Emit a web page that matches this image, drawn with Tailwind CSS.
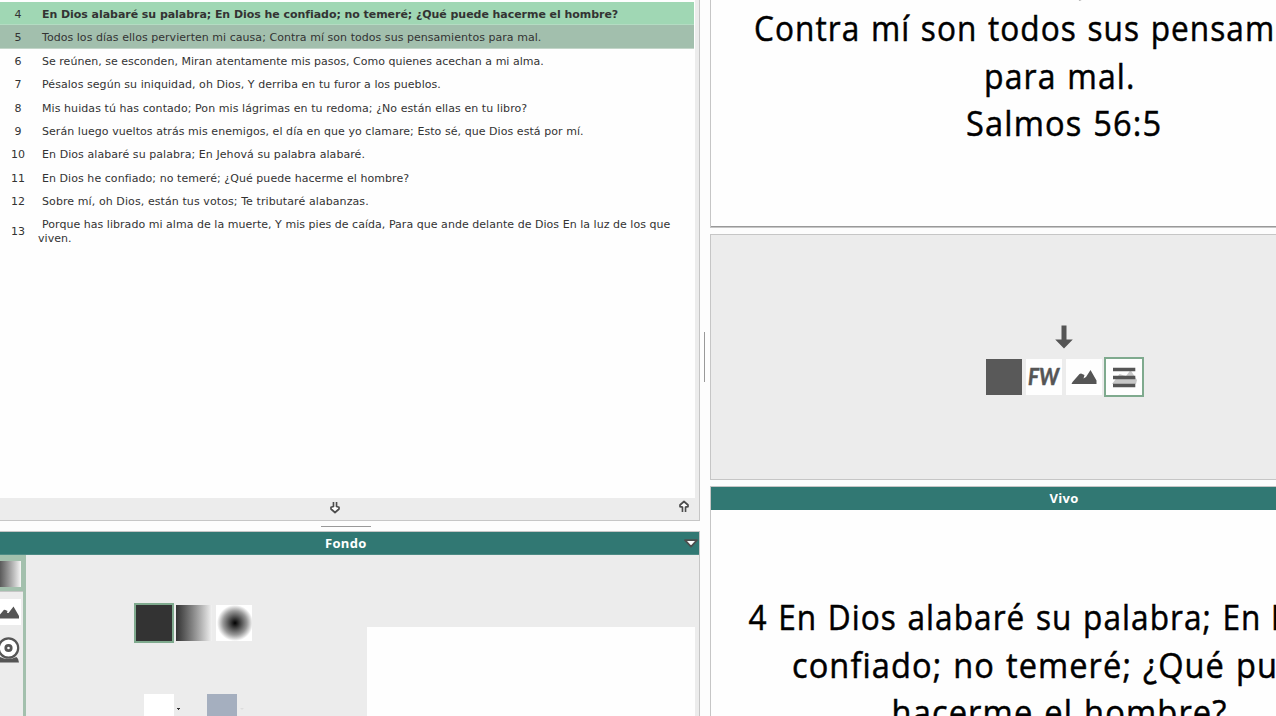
<!DOCTYPE html>
<html lang="es">
<head>
<meta charset="utf-8">
<title>Salmos 56</title>
<script src="https://cdn.jsdelivr.net/npm/@tailwindcss/browser@4"></script>
</head>
<body class="h-[716px] w-[1276px] overflow-hidden bg-[#fdfdfd] font-['DejaVu_Sans',sans-serif] text-[#333]">
<div class="flex h-[716px] w-[1276px] overflow-hidden">

  <!-- Left column -->
  <div class="flex w-[700px] shrink-0 flex-col">
    <section class="flex h-[521px] shrink-0 flex-col border-r border-b border-[#c6c6c6] bg-[#ececec]">
      <div class="flex h-[498px] w-[695px] flex-col bg-[#fefefe] pt-[2px] text-[11px] leading-[14px]">
        <div class="flex h-[23.4px] w-[694px] items-center border-b border-[#b3dcc2] bg-[#a0d7b4] pt-[3.2px]"><span class="w-[36px] text-center">4</span><span class="ml-[6px] whitespace-nowrap font-bold tracking-[-0.05px]">En Dios alabaré su palabra; En Dios he confiado; no temeré; ¿Qué puede hacerme el hombre?</span></div>
        <div class="flex h-[23.4px] w-[694px] items-center border-b border-[#c3d5c9] bg-[#a2bfad] pt-[2px]"><span class="w-[36px] text-center">5</span><span class="ml-[6px] whitespace-nowrap tracking-[0.04px]">Todos los días ellos pervierten mi causa; Contra mí son todos sus pensamientos para mal.</span></div>
        <div class="flex h-[23.4px] items-center pt-[2.6px]"><span class="w-[36px] text-center">6</span><span class="ml-[6px] whitespace-nowrap tracking-[0.02px]">Se reúnen, se esconden, Miran atentamente mis pasos, Como quienes acechan a mi alma.</span></div>
        <div class="flex h-[23.4px] items-center pt-[2.6px]"><span class="w-[36px] text-center">7</span><span class="ml-[6px] whitespace-nowrap tracking-[0.06px]">Pésalos según su iniquidad, oh Dios, Y derriba en tu furor a los pueblos.</span></div>
        <div class="flex h-[23.4px] items-center pt-[2.6px]"><span class="w-[36px] text-center">8</span><span class="ml-[6px] whitespace-nowrap tracking-[0.07px]">Mis huidas tú has contado; Pon mis lágrimas en tu redoma; ¿No están ellas en tu libro?</span></div>
        <div class="flex h-[23.4px] items-center pt-[2.6px]"><span class="w-[36px] text-center">9</span><span class="ml-[6px] whitespace-nowrap tracking-[0.057px]">Serán luego vueltos atrás mis enemigos, el día en que yo clamare; Esto sé, que Dios está por mí.</span></div>
        <div class="flex h-[23.4px] items-center pt-[2.6px]"><span class="w-[36px] text-center">10</span><span class="ml-[6px] whitespace-nowrap tracking-[0.07px]">En Dios alabaré su palabra; En Jehová su palabra alabaré.</span></div>
        <div class="flex h-[23.4px] items-center pt-[2.6px]"><span class="w-[36px] text-center">11</span><span class="ml-[6px] whitespace-nowrap tracking-[0.057px]">En Dios he confiado; no temeré; ¿Qué puede hacerme el hombre?</span></div>
        <div class="flex h-[23.4px] items-center pt-[2.6px]"><span class="w-[36px] text-center">12</span><span class="ml-[6px] whitespace-nowrap tracking-[0.09px]">Sobre mí, oh Dios, están tus votos; Te tributaré alabanzas.</span></div>
        <div class="flex h-[37px] items-center pt-[2px]"><span class="w-[36px] text-center">13</span><span class="ml-[2px] whitespace-nowrap tracking-[0.036px]"><span class="ml-[4px]">Porque has librado mi alma de la muerte, Y mis pies de caída, Para que ande delante de Dios En la luz de los que</span><br>viven.</span></div>
      </div>
      <div class="flex flex-1 items-center justify-between pr-[9px] pl-[329px]">
        <svg class="-mt-[3px] h-[13px] w-[12px]" viewBox="0 0 12 13" fill="#fff" stroke="#4d4d4d" stroke-width="1.7" stroke-linejoin="round"><path d="M4.500 1V5.500L2 6.300V8L6 11.500 10 8V6.300L7.500 5.500V1" /></svg>
        <svg class="-mt-[5px] h-[13px] w-[12px]" viewBox="0 0 12 13" fill="#fff" stroke="#4d4d4d" stroke-width="1.7" stroke-linejoin="round"><path d="M4.500 12V7.200L2 6.700V5L6 1.500 10 5V6.700L7.500 7.200V12" /></svg>
      </div>
    </section>
    <div class="flex h-[10px] shrink-0 pt-[5px] pl-[321px]"><div class="h-px w-[50px] bg-[#999]"></div></div>
    <section class="flex flex-1 flex-col border-t border-r border-[#c6c6c6] bg-[#ececec]">
      <header class="flex h-[23px] shrink-0 items-center border-b border-[#4d8b85] bg-[#317873] pt-[2px] pr-[1px] pl-[325px] font-['Open_Sans',sans-serif] text-[13px] font-bold text-white">
        <span class="tracking-[0.3px]">Fondo</span>
        <svg class="-mt-[1px] ml-auto h-[9px] w-[14px]" viewBox="0 0 14 9"><path d="M1 1.200H13L7 7.700Z" fill="#fff" stroke="#4d4d4d" stroke-width="1.700" stroke-linejoin="round"/></svg>
      </header>
      <div class="flex flex-1">
        <nav class="flex w-[26px] shrink-0 flex-col border-r-[3px] border-[#a3c0ad]">
          <div class="h-[37px] border-b border-[#c6c6c6] bg-[#a3c0ad] pt-[6px]"><div class="h-[26px] w-[21px] bg-linear-to-r from-[#5b5b5b] to-[#f6f6f6]"></div></div>
          <svg class="mt-[7px] h-[26px] w-[21px] bg-white" viewBox="0 0 21 26"><path d="M0 15.500 4 10.700 5.500 11 7.500 12 7 14 8.500 14 13.500 7.500 19 17V19.500H0Z" fill="#555"/></svg>
          <svg class="mt-[12px] h-[27px] w-[21px]" viewBox="0 0 21 27" fill="none" stroke="#555"><path d="M0 20Q8 24 16.500 20 19 22 19 25.500H0Z" fill="#555" stroke="none"/><circle cx="8.500" cy="11" r="9.700" fill="#fff" stroke-width="2.200"/><circle cx="8.500" cy="11" r="2.700" stroke-width="2.800"/></svg>
        </nav>
        <div class="flex w-[341px] shrink-0 flex-col pt-[48px]">
          <div class="flex h-[40px] items-center gap-[2px] pl-[108px]">
            <div class="size-[40px] border-2 border-[#7faa8e] bg-[#333]"></div>
            <div class="mr-[2px] size-[36px] bg-linear-to-r from-[#333] to-[#f2f2f2]"></div>
            <div class="size-[36px] bg-[radial-gradient(circle_at_19px_18px,#000_0px,#333_4px,#999_12px,#ddd_16px,#fff_18px)]"></div>
          </div>
          <div class="mt-[51px] flex pl-[118px]">
            <div class="h-[22px] w-[30px] bg-white"></div>
            <svg class="mt-[14px] ml-[3px] h-[2px] w-[3px]" viewBox="0 0 3 2"><path d="M0 0H3V1H2V2H1V1H0Z" fill="#333"/></svg>
            <div class="ml-[27px] h-[22px] w-[30px] bg-[#a5afbf]"></div>
            <svg class="mt-[14px] ml-[3px] h-[2px] w-[4px]" viewBox="0 0 4 2"><path d="M0 0H4L2 2Z" fill="#ddd"/></svg>
          </div>
        </div>
        <div class="mt-[72px] w-[328px] bg-[#fefefe]"></div>
      </div>
    </section>
  </div>

  <div class="w-[10px] shrink-0 pt-[332px] pl-[4px]"><div class="h-[50px] w-px bg-[#999]"></div></div>

  <!-- Right column -->
  <div class="flex w-[566px] shrink-0 flex-col">
    <section class="h-[228px] shrink-0 border-b border-l border-[#c6c6c6]">
      <svg class="block h-[227px] w-[565px] border-b border-[#999] bg-[#fefefe] font-['Open_Sans',sans-serif] tracking-[1.2px] [word-spacing:1.5px]" viewBox="711 0 565 227" font-size="35.5" fill="#000" stroke="#000" stroke-width="0.5">
        <path d="M1079 0h3l-2 1z" fill="#aaa" stroke="none"/>
        <text x="753" y="41.500" textLength="523.500" lengthAdjust="spacingAndGlyphs">Contra mí son todos sus pensam</text>
        <text x="984" y="89" textLength="152" lengthAdjust="spacingAndGlyphs">para mal.</text>
        <text x="966" y="136.500" textLength="197" lengthAdjust="spacingAndGlyphs">Salmos 56:5</text>
      </svg>
    </section>
    <section class="mt-[6px] flex h-[246px] shrink-0 flex-col border-y border-l border-[#c6c6c6] bg-[#ececec] pt-[90px] pl-[274px]">
      <svg class="ml-[70px] h-[24px] w-[18px]" viewBox="0 0 18 24"><path d="M6.500 0.500H11.500V14.500H17.800L9 23.500 0.200 14.500H6.500Z" fill="#555"/></svg>
      <div class="mt-[8px] flex items-center">
        <div class="ml-[1px] size-[36px] bg-[#595959]"></div>
        <svg class="ml-[4px] size-[36px] bg-[#fefefe]" viewBox="0 0 36 36"><text x="2" y="26" font-family="Lato, sans-serif" font-size="22" font-weight="bold" font-style="italic" fill="#555" stroke="#555" stroke-width=".5" textLength="31" lengthAdjust="spacingAndGlyphs">FW</text></svg>
        <svg class="ml-[4px] size-[36px] bg-[#fefefe]" viewBox="0 0 36 36"><path d="M5.500 25 6.500 23 13.500 15 15 14.500 18.500 16 17.500 19.500 20 18 24.500 11 30.500 21.500V25Z" fill="#555"/></svg>
        <svg class="ml-[2px] size-[40px] border-2 border-[#7faa8e] bg-[#fefefe]" viewBox="0 0 36 36"><path d="M6 25 13.500 15 18 16.500 20 17 24.500 11 31 21 30 25Z" fill="#c8c8c8"/><path d="M7 8.800H29.300V12.200H7ZM7 16.800H29.300V20.200H7ZM7 24.800H29.300V28.200H7Z" fill="#555"/></svg>
      </div>
    </section>
    <section class="mt-[6px] flex flex-1 flex-col border-t border-l border-[#c6c6c6]">
      <header class="flex h-[23px] shrink-0 items-center bg-[#317873] pl-[338px] font-['Open_Sans',sans-serif] text-[13px] font-bold text-white"><span class="ml-[0.5px] tracking-[0.3px]">Vivo</span></header>
      <svg class="block h-[206px] w-[565px] bg-[#fefefe] font-['Open_Sans',sans-serif] tracking-[1.2px] [word-spacing:1.5px]" viewBox="711 510 565 206" font-size="35.5" fill="#000" stroke="#000" stroke-width="0.5">
        <text x="748.500" y="630" textLength="513" lengthAdjust="spacingAndGlyphs">4 En Dios alabaré su palabra; En</text>
        <text x="1270.500" y="630">D</text>
        <text x="792" y="678" textLength="486" lengthAdjust="spacingAndGlyphs">confiado; no temeré; ¿Qué pu</text>
        <text x="891.500" y="725" textLength="336" lengthAdjust="spacingAndGlyphs">hacerme el hombre?</text>
      </svg>
    </section>
  </div>
</div>
</body>
</html>
